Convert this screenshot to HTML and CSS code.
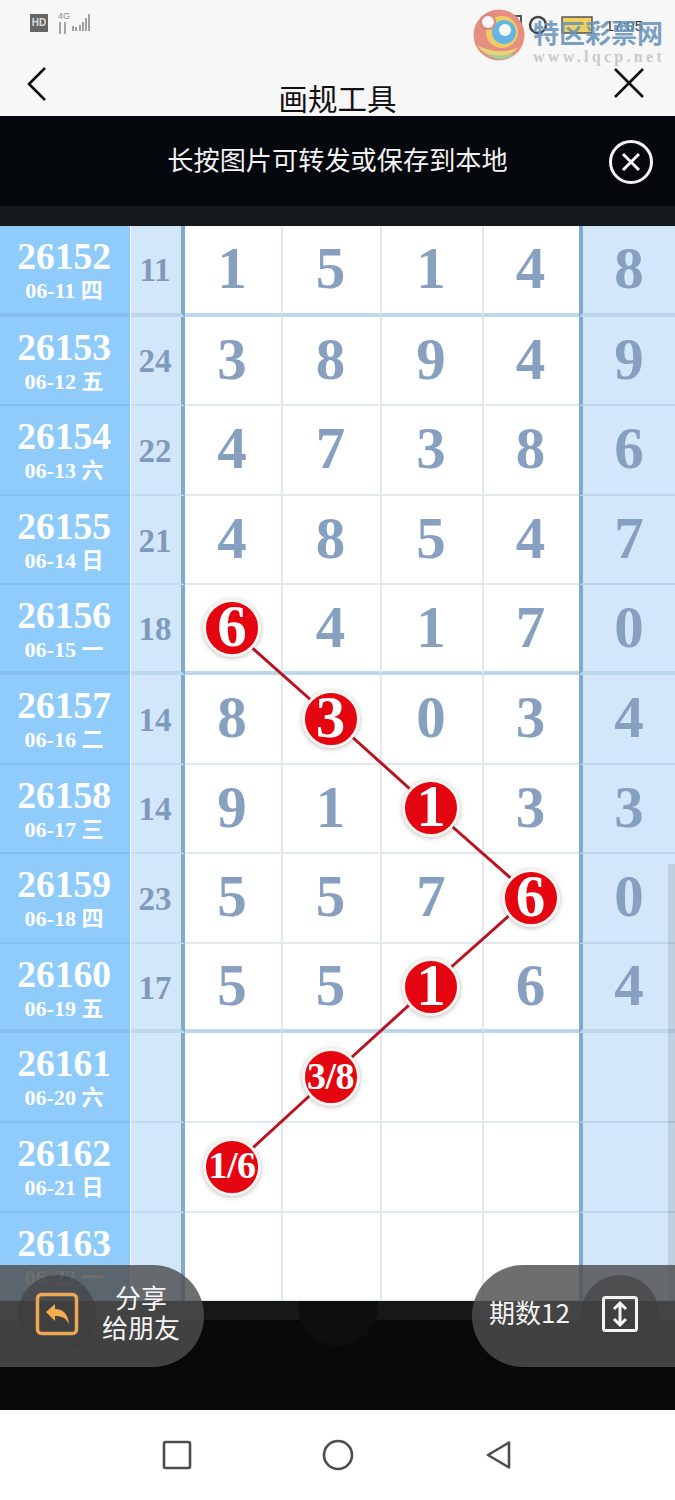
FILE: index.html
```html
<!DOCTYPE html>
<html lang="zh-CN">
<head>
    <meta charset="UTF-8">
    <meta name="viewport" content="width=device-width, initial-scale=1.0">
    <title>画规工具</title>
    <link rel="stylesheet" href="styles.css">
</head>
<body>
    <div class="page">
        <header class="top">
            <div class="status-bar">
                <span class="hd-badge">HD</span>
                <span class="net-type">4G<svg width="9" height="12" viewBox="0 0 9 12"><path d="M2 0v12M7 0v12" stroke="#8a8a8a" stroke-width="1.500"/></svg></span>
                <svg class="signal" width="18" height="20" viewBox="0 0 18 20">
                    <path d="M1 14v5M4 15v4M8 13v6M11 10v9M14 6v13M17 2v17" stroke="#a0a0a0" stroke-width="2"/>
                </svg>
                <svg class="status-icons" width="118" height="24" viewBox="0 0 118 24">
                    <circle cx="11" cy="11" r="7" fill="none" stroke="#555" stroke-width="2"/>
                    <path d="M31 3h12v16H31z" fill="none" stroke="#555" stroke-width="2"/>
                    <circle cx="60" cy="12" r="8" fill="none" stroke="#444" stroke-width="2.500"/>
                    <rect x="84" y="4" width="30" height="16" fill="#f2cf5a" stroke="#555" stroke-width="1.500"/>
                </svg>
                <span class="clock">17:05</span>
            </div>
            <div class="title-bar">
                <svg class="back-icon" width="22" height="36" viewBox="0 0 22 36">
                    <path d="M19 2 3 18l16 16" fill="none" stroke="#111" stroke-width="2.600"/>
                </svg>
                <h1 class="page-title">画规工具</h1>
                <svg class="close-icon" width="32" height="30" viewBox="0 0 32 30">
                    <path d="M2 1l28 28M30 1 2 29" fill="none" stroke="#111" stroke-width="2.600"/>
                </svg>
            </div>
            <!-- watermark sits over the status bar -->
            <div class="watermark">
                <svg width="52" height="52" viewBox="0 0 52 52">
                    <circle cx="26" cy="26" r="25.500" fill="#e48f82"/>
                    <path d="M4 36c8 13 28 18 42 2-12 6-28 6-42-2z" fill="#e9d27a"/>
                    <path d="M12 44c10 8 22 8 30 1-10 2-20 2-30-1z" fill="#a5cf98"/>
                    <circle cx="29" cy="23" r="16" fill="#f3cb62"/>
                    <circle cx="31" cy="23" r="12" fill="#63b6e4"/>
                    <circle cx="32" cy="21" r="6" fill="#f7f7f7"/>
                    <circle cx="15" cy="13" r="7" fill="#f7f7f7" stroke="#d8897d" stroke-width="2"/>
                </svg>
                <div class="watermark-text">
                    <span class="watermark-name">特区彩票网</span>
                    <span class="watermark-url">www.lqcp.net</span>
                </div>
            </div>
        </header>

        <div class="notice">
            <span class="notice-text">长按图片可转发或保存到本地</span>
            <svg class="notice-close" width="46" height="46" viewBox="0 0 46 46">
                <circle cx="23" cy="23" r="20.500" fill="none" stroke="#f4f4f4" stroke-width="3"/>
                <path d="M15 15l16 16M31 15 15 31" stroke="#f4f4f4" stroke-width="3"/>
            </svg>
        </div>

        <main class="chart">
            <svg class="chart-lines" width="675" height="1075" viewBox="0 0 675 1075">
                <polyline points="232,404 330,491 430,581 531,670 430,760 330,851 232,941" fill="none" stroke="#bb1420" stroke-width="3"/>
            </svg>

            <div class="row row-thick">
                <div class="period"><b>26152</b><small>06-11 四</small></div>
                <div class="sum">11</div>
                <div class="num">1</div><div class="num">5</div><div class="num">1</div><div class="num">4</div>
                <div class="num last">8</div>
            </div>
            <div class="row">
                <div class="period"><b>26153</b><small>06-12 五</small></div>
                <div class="sum">24</div>
                <div class="num">3</div><div class="num">8</div><div class="num">9</div><div class="num">4</div>
                <div class="num last">9</div>
            </div>
            <div class="row">
                <div class="period"><b>26154</b><small>06-13 六</small></div>
                <div class="sum">22</div>
                <div class="num">4</div><div class="num">7</div><div class="num">3</div><div class="num">8</div>
                <div class="num last">6</div>
            </div>
            <div class="row">
                <div class="period"><b>26155</b><small>06-14 日</small></div>
                <div class="sum">21</div>
                <div class="num">4</div><div class="num">8</div><div class="num">5</div><div class="num">4</div>
                <div class="num last">7</div>
            </div>
            <div class="row row-thick">
                <div class="period"><b>26156</b><small>06-15 一</small></div>
                <div class="sum">18</div>
                <div class="num"><span class="ball">6</span></div><div class="num">4</div><div class="num">1</div><div class="num">7</div>
                <div class="num last">0</div>
            </div>
            <div class="row">
                <div class="period"><b>26157</b><small>06-16 二</small></div>
                <div class="sum">14</div>
                <div class="num">8</div><div class="num"><span class="ball">3</span></div><div class="num">0</div><div class="num">3</div>
                <div class="num last">4</div>
            </div>
            <div class="row">
                <div class="period"><b>26158</b><small>06-17 三</small></div>
                <div class="sum">14</div>
                <div class="num">9</div><div class="num">1</div><div class="num"><span class="ball">1</span></div><div class="num">3</div>
                <div class="num last">3</div>
            </div>
            <div class="row">
                <div class="period"><b>26159</b><small>06-18 四</small></div>
                <div class="sum">23</div>
                <div class="num">5</div><div class="num">5</div><div class="num">7</div><div class="num"><span class="ball">6</span></div>
                <div class="num last">0</div>
            </div>
            <div class="row row-thick">
                <div class="period"><b>26160</b><small>06-19 五</small></div>
                <div class="sum">17</div>
                <div class="num">5</div><div class="num">5</div><div class="num"><span class="ball">1</span></div><div class="num">6</div>
                <div class="num last">4</div>
            </div>
            <div class="row">
                <div class="period"><b>26161</b><small>06-20 六</small></div>
                <div class="sum"></div>
                <div class="num"></div><div class="num"><span class="ball ball-small">3/8</span></div><div class="num"></div><div class="num"></div>
                <div class="num last"></div>
            </div>
            <div class="row">
                <div class="period"><b>26162</b><small>06-21 日</small></div>
                <div class="sum"></div>
                <div class="num"><span class="ball ball-small">1/6</span></div><div class="num"></div><div class="num"></div><div class="num"></div>
                <div class="num last"></div>
            </div>
            <div class="row">
                <div class="period"><b>26163</b><small>06-22 一</small></div>
                <div class="sum"></div>
                <div class="num"></div><div class="num"></div><div class="num"></div><div class="num"></div>
                <div class="num last"></div>
            </div>

            <div class="scroll-thumb"></div>
        </main>

        <div class="shade">
            <span class="shade-circle"></span>
        </div>

        <nav class="nav-bar">
            <svg width="32" height="32" viewBox="0 0 32 32">
                <rect x="3" y="3" width="26" height="26" rx="1.500" fill="none" stroke="#4c4c4c" stroke-width="2.600"/>
            </svg>
            <svg width="32" height="32" viewBox="0 0 32 32">
                <circle cx="16" cy="16" r="14" fill="none" stroke="#4c4c4c" stroke-width="2.600"/>
            </svg>
            <svg width="32" height="32" viewBox="0 0 32 32">
                <path d="M5 16 26 3.500V28.500z" fill="none" stroke="#4c4c4c" stroke-width="2.600" stroke-linejoin="round"/>
            </svg>
        </nav>

        <div class="pill pill-left">
            <span class="pill-icon">
                <svg width="44" height="44" viewBox="0 0 44 44">
                    <rect x="2.500" y="2.500" width="39" height="39" rx="4" fill="none" stroke="#eea752" stroke-width="3.500"/>
                    <path d="M11 20l9-8v5c8 0 13 5 14 15-3-6-7-8-14-8v5z" fill="#f6ac4d"/>
                </svg>
            </span>
            <span class="pill-text">分享<br>给朋友</span>
        </div>

        <div class="pill pill-right">
            <span class="pill-text">期数12</span>
            <span class="pill-icon">
                <svg width="36" height="36" viewBox="0 0 36 36">
                    <rect x="1.500" y="1.500" width="33" height="33" rx="2" fill="none" stroke="#f4f4f4" stroke-width="3"/>
                    <path d="M18 8v20M12 13l6-6 6 6M12 23l6 6 6-6" fill="none" stroke="#f4f4f4" stroke-width="3"/>
                </svg>
            </span>
        </div>
    </div>
</body>
</html>
```

FILE: styles.css
```css
* {
    box-sizing: border-box;
}
body {
    margin: 0;
    background-color: #fff;
    font-family: "Noto Sans CJK SC", sans-serif;
}
.page {
    position: relative;
    width: 675px;
    height: 1500px;
    overflow: hidden;
}

/* top area */
.top {
    position: relative;
    height: 116px;
    background-color: #f7f7f7;
}
.status-bar {
    display: flex;
    align-items: flex-start;
    height: 60px;
    padding: 14px 32px 0 30px;
}
.hd-badge {
    width: 18px;
    height: 18px;
    background-color: #666;
    color: #ddd;
    font: bold 10px/18px "Liberation Sans", sans-serif;
    text-align: center;
}
.net-type {
    display: flex;
    flex-direction: column;
    width: 14px;
    margin: -3px 0 0 10px;
    color: #8a8a8a;
    font: 9px/11px "Liberation Sans", sans-serif;
}
.signal {
    margin: -2px 0 0 0;
}
.status-icons {
    margin: -1px 0 0 388px;
}
.clock {
    margin: 4px 0 0 auto;
    color: #333;
    font: 15px/16px "Liberation Sans", sans-serif;
}
.title-bar {
    position: relative;
    display: flex;
    justify-content: space-between;
    height: 56px;
    padding: 6px 30px 0 26px;
}
.close-icon {
    margin-top: 2px;
}
.page-title {
    position: absolute;
    top: 14px;
    left: 0;
    width: 100%;
    margin: 0;
    color: #111;
    font-size: 29.500px;
    font-weight: 400;
    line-height: 46px;
    text-align: center;
}
.watermark {
    position: absolute;
    top: 9px;
    left: 473px;
    display: flex;
    gap: 8px;
}
.watermark-text {
    display: flex;
    flex-direction: column;
    padding-top: 7px;
}
.watermark-name {
    color: rgba(104, 148, 186, 0.88);
    font-size: 26px;
    font-weight: 700;
    line-height: 32px;
}
.watermark-url {
    color: #c9c9c9;
    font: bold 16px/18px "Liberation Serif", serif;
    letter-spacing: 3.300px;
    white-space: nowrap;
}

/* dark bar with the hint */
.notice {
    position: relative;
    height: 110px;
    background: linear-gradient(#05080c 0, #05080c 90px, #14181c 90px);
    color: #f2f2f2;
}
.notice-text {
    display: block;
    font-size: 26.200px;
    line-height: 87px;
    text-align: center;
}
.notice-close {
    position: absolute;
    top: 23px;
    right: 21px;
}

/* chart table */
.chart {
    position: relative;
    height: 1075px;
    overflow: hidden;
    background-color: #fff;
}
.chart-lines {
    position: absolute;
    top: 0;
    left: 0;
    z-index: 1;
}
.row {
    display: grid;
    grid-template-columns: 130px 55px 96px 99px 102px 97px 96px;
    height: 89.600px;
    font-family: "Liberation Serif", serif;
    font-weight: 700;
}
.chart-lines + .row {
    height: 90.600px;
}
.period {
    display: flex;
    flex-direction: column;
    align-items: center;
    padding: 12px 2px 0 0;
    border-bottom: 2px solid #86bfee;
    background-color: #8fcbfb;
    color: #fff;
}
.period b {
    font-size: 37.500px;
    line-height: 38px;
}
.period small {
    font-family: "Liberation Serif", "Noto Sans CJK SC", serif;
    font-size: 22px;
    line-height: 30px;
}
.sum {
    display: flex;
    align-items: center;
    justify-content: center;
    margin-left: 1px;
    padding-top: 3px;
    padding-right: 2px;
    border-right: 4px solid #82a9cc;
    border-bottom: 2px solid #c3d9ee;
    background-color: #d3e7fb;
    color: #7f9bbc;
    font-size: 33px;
}
.num {
    display: flex;
    align-items: center;
    justify-content: center;
    padding-right: 2px;
    padding-bottom: 2px;
    border-left: 2px solid #e0e9ee;
    border-bottom: 2px solid #e0e7ee;
    color: #87a0c0;
    font-size: 59px;
}
.num:nth-child(3) {
    border-left: 0;
}
.last {
    padding-right: 0;
    border-left: 4px solid #82a9cc;
    border-bottom-color: #bcd3e8;
    background-color: #d3e7fb;
}
.row-thick .period {
    border-bottom-width: 4px;
}
.row-thick .sum,
.row-thick .num {
    border-bottom: 4px solid #bcd6ec;
}
.ball {
    position: relative;
    z-index: 2;
    display: flex;
    align-items: center;
    justify-content: center;
    width: 58px;
    height: 58px;
    margin-top: 2px;
    padding-bottom: 3px;
    border: 3px solid #fbf5f1;
    border-radius: 50%;
    background-color: #e50511;
    box-shadow: 0 1px 5px rgba(60, 60, 60, 0.35);
    color: #fff;
}
.ball-small {
    font-size: 38px;
    letter-spacing: -0.500px;
}
.scroll-thumb {
    position: absolute;
    top: 638px;
    right: 0;
    bottom: 0;
    z-index: 3;
    width: 7px;
    background-color: rgba(90, 90, 90, 0.16);
}

/* bottom dark area */
.shade {
    position: relative;
    height: 109px;
    overflow: hidden;
    background: linear-gradient(#171717 0, #171717 19px, #090909 19px);
}
.shade-circle {
    position: absolute;
    top: -23px;
    left: 298px;
    width: 80px;
    height: 68px;
    border-radius: 0 0 40px 40px;
    background-color: #0e0e0e;
}
.nav-bar {
    display: flex;
    justify-content: center;
    gap: 129px;
    height: 90px;
    padding-top: 29px;
    background-color: #fff;
}

/* floating buttons */
.pill {
    position: absolute;
    top: 1265px;
    z-index: 4;
    display: flex;
    align-items: center;
    height: 102px;
    background-color: rgba(78, 78, 78, 0.82);
    color: #f4f4f4;
}
.pill-left {
    left: 0;
    width: 204px;
    padding-left: 18px;
    border-radius: 0 51px 51px 0;
}
.pill-right {
    right: 0;
    width: 203px;
    padding-left: 17px;
    border-radius: 51px 0 0 51px;
}
.pill-icon {
    display: flex;
    flex-shrink: 0;
    align-items: center;
    justify-content: center;
    width: 78px;
    height: 78px;
    margin-top: -5px;
    border-radius: 50%;
    background-color: rgba(62, 62, 62, 0.6);
}
.pill-text {
    margin-top: -9px;
    font-size: 26px;
    line-height: 30px;
    text-align: center;
}
.pill-left .pill-text {
    margin-left: 6px;
}
.pill-right .pill-icon {
    margin-left: 11px;
}
```
